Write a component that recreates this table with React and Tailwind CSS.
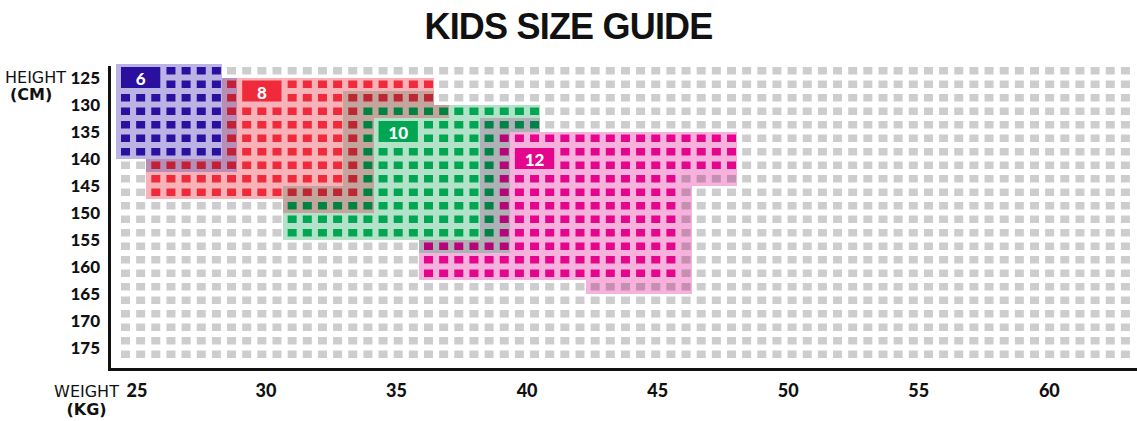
import React from "react";

// grid geometry (svg coords, svg starts at page x=106, y=60)
const COLS = 67;
const ROWS = 22;
const PX = 15.15;
const PY = 13.5;
const SX0 = 15;
const SY0 = 7;
const SW = 9;
const SH = 7.5;
const GRAY = "#cdcdcd";
const OVERLAP = 0.7; // how strongly a second tint darkens what lies under it

// rects are [colFrom, colTo, rowFrom, rowTo], inclusive
const SIZES = [
  {
    id: "6",
    core: "#2b0f9f",
    tint: "#bab3e4",
    coreRects: [[0, 6, 0, 6]],
    tintRects: [[7, 7, 1, 7], [2, 6, 7, 7]],
    label: [0, 2, 0, 1],
  },
  {
    id: "8",
    core: "#ee2a3b",
    tint: "#f9b3b8",
    coreRects: [[7, 20, 1, 2], [7, 15, 3, 6], [2, 15, 7, 9]],
    tintRects: [[16, 16, 3, 10], [11, 15, 10, 10], [16, 21, 3, 3]],
    label: [8, 10, 1, 2],
  },
  {
    id: "10",
    core: "#00a651",
    tint: "#b2e3c9",
    coreRects: [[16, 27, 3, 4], [16, 24, 5, 9], [11, 24, 10, 12]],
    tintRects: [[15, 20, 2, 2], [15, 15, 3, 9], [11, 14, 9, 9], [25, 25, 5, 13], [20, 24, 13, 13]],
    label: [17, 19, 4, 5],
  },
  {
    id: "12",
    core: "#e5058d",
    tint: "#f6b1dc",
    coreRects: [[25, 40, 5, 7], [25, 36, 8, 12], [20, 36, 13, 15]],
    tintRects: [[37, 40, 8, 8], [37, 37, 9, 15], [31, 37, 16, 16], [24, 27, 4, 4], [24, 24, 5, 12]],
    label: [26, 28, 6, 7],
  },
];

const HEIGHTS = [125, 130, 135, 140, 145, 150, 155, 160, 165, 170, 175];
const WEIGHTS = [30, 35, 40, 45, 50, 55, 60];

const inRects = (rects, r, c) =>
  rects.some(([c0, c1, r0, r1]) => c >= c0 && c <= c1 && r >= r0 && r <= r1);

const toRgb = (hex) => [1, 3, 5].map((i) => parseInt(hex.slice(i, i + 2), 16));
// multiply a colour by a tint, k = strength of the tint
const mult = (a, b, k = 1) => a.map((v, i) => Math.round(v * (1 - k * (1 - b[i] / 255))));
const css = (rgb) => `rgb(${rgb.join(",")})`;

// work out the colour of every cell once
const cells = [];
for (let r = 0; r < ROWS; r++) {
  for (let c = 0; c < COLS; c++) {
    const covering = SIZES.filter((s) => inRects(s.coreRects, r, c) || inRects(s.tintRects, r, c));
    const owner = SIZES.find((s) => inRects(s.coreRects, r, c));
    const onLabel = SIZES.some((s) => inRects([s.label], r, c));
    let bg = [255, 255, 255];
    covering.forEach((s, i) => (bg = mult(bg, toRgb(s.tint), i === 0 ? 1 : OVERLAP)));
    let sq;
    if (owner) {
      sq = toRgb(owner.core);
      covering.forEach((s) => {
        if (s !== owner) sq = mult(sq, toRgb(s.tint), OVERLAP);
      });
    } else {
      sq = toRgb(GRAY);
      covering.forEach((s, i) => (sq = mult(sq, toRgb(s.tint), i === 0 ? 1 : OVERLAP)));
    }
    cells.push({ r, c, tinted: covering.length > 0, bg: css(bg), sq: css(sq), onLabel });
  }
}

const sx = (c) => SX0 + PX * c;
const sy = (r) => SY0 + PY * r;

const Chart = () => (
  <svg width="1031" height="313" viewBox="0 0 1031 313">
    <g shapeRendering="crispEdges">
      {cells
        .filter((cell) => cell.tinted)
        .map((cell) => (
          <rect key={`t${cell.r}-${cell.c}`} x={sx(cell.c) - 5} y={sy(cell.r) - 3} width={PX} height={PY} fill={cell.bg} />
        ))}
    </g>
    {cells
      .filter((cell) => !cell.onLabel)
      .map((cell) => (
        <rect key={`s${cell.r}-${cell.c}`} x={sx(cell.c)} y={sy(cell.r)} width={SW} height={SH} fill={cell.sq} />
      ))}
    {SIZES.map((s) => {
      const [c0, c1, r0, r1] = s.label;
      const x = sx(c0);
      const y = sy(r0);
      const w = sx(c1) + SW - x;
      const h = sy(r1) + SH - y;
      return (
        <g key={s.id}>
          <rect x={x} y={y} width={w} height={h} fill={s.core} />
          <text
            x={x + w / 2}
            y={y + h / 2 + 1}
            textAnchor="middle"
            dominantBaseline="central"
            fill="#fff"
            fontFamily="Lato, sans-serif"
            fontWeight="900"
            fontSize="17"
          >
            {s.id}
          </text>
        </g>
      );
    })}
    {/* axes */}
    <rect x="2" y="6" width="3" height="305" fill="#111" />
    <rect x="2" y="308" width="1029" height="3" fill="#111" />
  </svg>
);

export default function App() {
  return (
    <div className="w-[1137px] h-[421px] bg-white text-[#111] overflow-hidden">
      <h1 className="h-[60px] pt-[9px] text-center text-[36px] leading-[36px] font-bold tracking-[-0.8px] font-['Liberation_Sans',Arial,sans-serif]">
        KIDS SIZE GUIDE
      </h1>

      <div className="flex h-[313px]">
        <div className="w-[106px] pt-[4px] flex flex-col">
          {HEIGHTS.map((h, i) => (
            <div key={h} className="h-[27px] flex items-center justify-between pr-[6px]">
              {i === 0 ? (
                <span className="pl-[5px] font-['DejaVu_Sans',sans-serif] text-[16px] leading-[16px]">HEIGHT</span>
              ) : i === 1 ? (
                <span className="self-start -mt-[4.5px] pl-[10px] font-['DejaVu_Sans',sans-serif] font-bold text-[16px] leading-[16px]">
                  (CM)
                </span>
              ) : (
                <span />
              )}
              <span className="font-['Lato',sans-serif] font-black text-[17px] leading-none">{h}</span>
            </div>
          ))}
        </div>
        <Chart />
      </div>

      <div className="flex items-baseline mt-[7px]">
        <div className="ml-[53px] w-[67px] flex flex-col items-center font-['DejaVu_Sans',sans-serif] text-[16px]">
          <span className="leading-[20px]">WEIGHT</span>
          <span className="leading-[16px] font-bold">(KG)</span>
        </div>
        <span className="w-[34px] text-center font-['Lato',sans-serif] font-black text-[18px] leading-[20px]">25</span>
        <div className="ml-[46.7px] flex">
          {WEIGHTS.map((w) => (
            <span key={w} className="w-[130.57px] text-center font-['Lato',sans-serif] font-black text-[18px] leading-[20px]">
              {w}
            </span>
          ))}
        </div>
      </div>
    </div>
  );
}
